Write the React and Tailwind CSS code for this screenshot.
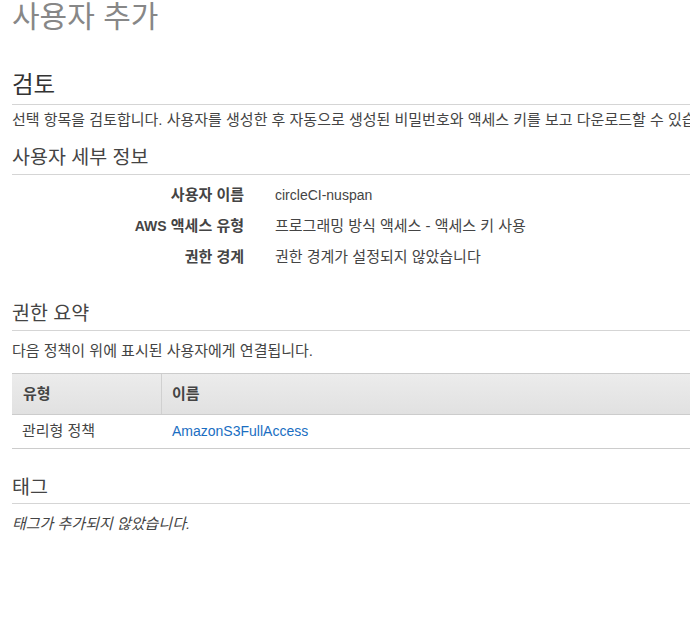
export default function App() {
  const font = { fontFamily: '"Liberation Sans", "Noto Sans CJK KR", Arial, sans-serif' };
  return (
    <div className="w-[690px] h-[617px] overflow-hidden bg-white" style={font}>
      <div className="pl-[12px] w-[800px] text-[#444444]">
        <h1 className="text-[30px] leading-[34px] text-[#878787] font-normal">사용자 추가</h1>

        <h2 className="mt-[37px] text-[23.5px] leading-[28px] text-[#333333] pb-[5px] border-b border-[#d5d5d5]">검토</h2>
        <p className="mt-[5px] text-[15px] leading-[20px] whitespace-nowrap">
          선택 항목을 검토합니다. 사용자를 생성한 후 자동으로 생성된 비밀번호와 액세스 키를 보고 다운로드할 수 있습니다.
        </p>

        <h3 className="mt-[15px] text-[19.5px] leading-[24px] text-[#444444] pb-[5px] border-b border-[#d5d5d5]">사용자 세부 정보</h3>
        <div className="mt-[5px] text-[15px]">
          <div className="flex items-center h-[31px]">
            <div className="w-[232px] text-right font-bold">사용자 이름</div>
            <div className="ml-[31px] text-[14px]">circleCI-nuspan</div>
          </div>
          <div className="flex items-center h-[31px]">
            <div className="w-[232px] text-right font-bold"><span className="text-[14px]">AWS</span> 액세스 유형</div>
            <div className="ml-[31px]">프로그래밍 방식 액세스 - 액세스 키 사용</div>
          </div>
          <div className="flex items-center h-[31px]">
            <div className="w-[232px] text-right font-bold">권한 경계</div>
            <div className="ml-[31px]">권한 경계가 설정되지 않았습니다</div>
          </div>
        </div>

        <h3 className="mt-[28px] text-[19.5px] leading-[24px] text-[#444444] pb-[5px] border-b border-[#d5d5d5]">권한 요약</h3>
        <p className="mt-[10px] text-[15px] leading-[20px]">다음 정책이 위에 표시된 사용자에게 연결됩니다.</p>

        <div className="mt-[12px] text-[15px]">
          <div className="flex h-[42px] border-y border-[#cccccc] bg-gradient-to-b from-[#ececec] to-[#e1e1e1] font-bold">
            <div className="w-[150px] flex items-center pl-[11px] border-r border-[#d0d0d0]">유형</div>
            <div className="flex-1 flex items-center pl-[10px]">이름</div>
          </div>
          <div className="flex h-[34px] border-b border-[#cccccc]">
            <div className="w-[150px] flex items-center pl-[10px]">관리형 정책</div>
            <div className="flex-1 flex items-center pl-[10px] text-[14px] text-[#1a6ec2]">AmazonS3FullAccess</div>
          </div>
        </div>

        <h3 className="mt-[26px] text-[19.5px] leading-[24px] text-[#444444] pb-[4px] border-b border-[#d5d5d5]">태그</h3>
        <p className="mt-[10px] text-[15px] leading-[20px] italic">태그가 추가되지 않았습니다.</p>
      </div>
    </div>
  );
}
